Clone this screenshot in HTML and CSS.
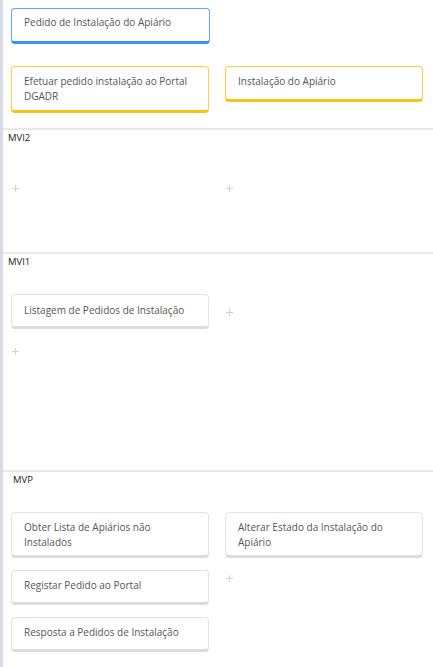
FILE: index.html
```html
<!DOCTYPE html>
<html lang="pt">
<head>
<meta charset="utf-8">
<title>Story Map</title>
<link rel="stylesheet" href="styles.css">
</head>
<body>
<div class="page">
  <div class="strip"></div>
  <main class="board">
    <section class="head">
      <div class="row">
        <div class="card card-blue">Pedido de Instalação do Apiário</div>
      </div>
      <div class="cols row-tasks">
        <div class="col">
          <div class="card card-yellow">Efetuar pedido instalação ao Portal DGADR</div>
        </div>
        <div class="col">
          <div class="card card-yellow">Instalação do Apiário</div>
        </div>
      </div>
    </section>

    <section class="lane lane-mvi2">
      <div class="lane-label">MVI2</div>
      <div class="cols">
        <div class="col"><div class="add add-empty"><span class="plus"></span></div></div>
        <div class="col"><div class="add add-empty"><span class="plus"></span></div></div>
      </div>
    </section>

    <section class="lane lane-mvi1">
      <div class="lane-label">MVI1</div>
      <div class="cols">
        <div class="col">
          <div class="card">Listagem de Pedidos de Instalação</div>
          <div class="add"><span class="plus"></span></div>
        </div>
        <div class="col"><div class="add add-empty"><span class="plus"></span></div></div>
      </div>
    </section>

    <section class="lane lane-mvp">
      <div class="lane-label lane-label-mvp">MVP</div>
      <div class="cols">
        <div class="col">
          <div class="card">Obter Lista de Apiários não Instalados</div>
          <div class="card">Registar Pedido ao Portal</div>
          <div class="card">Resposta a Pedidos de Instalação</div>
        </div>
        <div class="col">
          <div class="card">Alterar Estado da Instalação do Apiário</div>
          <div class="add"><span class="plus"></span></div>
        </div>
      </div>
    </section>
  </main>
</div>
</body>
</html>
```
FILE: styles.css
```css
* { box-sizing: border-box; }
html, body { margin: 0; padding: 0; background: #fff; }
body {
  font-family: "Open Sans", "Noto Sans", sans-serif;
  font-size: 10px;
  color: #444;
  overflow: hidden;
}
.page { display: flex; min-height: 667px; }
.strip { width: 3px; flex: none; background: #d6dce8; }
.board { flex: 1; min-width: 0; }

.head {
  height: 128px;
  padding: 8px 0 0 8px;
}
.row { display: flex; }
.cols {
  display: grid;
  grid-template-columns: 198px 198px;
  column-gap: 16px;
  padding-left: 8px;
}
.head .cols { padding-left: 0; }
.row-tasks { margin-top: 22px; align-items: start; }
.col { display: flex; flex-direction: column; gap: 12px; }

.card {
  width: 198px;
  min-height: 35px;
  padding: 7px 12px 5px 12px;
  line-height: 15px;
  background: #fff;
  border: 1px solid #e4e4e4;
  border-bottom: 3px solid #dcdcdc;
  border-radius: 4px;
  color: #555;
}
.card-blue {
  width: 199px;
  min-height: 36px;
  padding-top: 6px;
  border: 1.5px solid #5aaaf7;
  border-bottom: 3px solid #3a93f0;
}
.card-yellow {
  min-height: 36px;
  padding-bottom: 6px;
  border: 1.5px solid #fdd03c;
  border-bottom: 3px solid #f7c21b;
}

.lane { border-top: 2px solid #e9e9e9; }
.lane-mvi2 { height: 124px; }
.lane-mvi1 { height: 218px; }
.lane-mvp { height: 199px; }

.lane-label {
  padding: 1px 0 0 5px;
  height: 40px;
  line-height: 14px;
  font-size: 9.5px;
  color: #222;
}
.lane-label-mvp { padding-left: 10px; }
.lane-mvi1 .card { padding-top: 8px; }

.add { height: 20px; position: relative; }
.add-empty { height: 35px; }
.plus {
  position: absolute;
  left: 1px;
  top: 5px;
  width: 7px;
  height: 7px;
}
.add-empty .plus { top: 15px; }
.lane-mvi1 .add:not(.add-empty) .plus { top: 7px; }
.plus::before, .plus::after {
  content: "";
  position: absolute;
  background: #d2d2d2;
}
.plus::before { left: 0; right: 0; top: 3px; height: 1px; }
.plus::after { top: 0; bottom: 0; left: 3px; width: 1px; }
```
